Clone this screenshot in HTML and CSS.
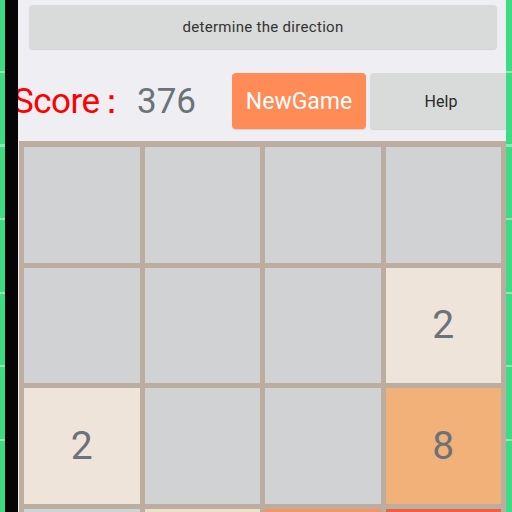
FILE: index.html
```html
<!DOCTYPE html>
<html>
<head>
<meta charset="utf-8">
<link rel="stylesheet" href="styles.css">
</head>
<body>
<div class="screen">
  <div class="edge edge-left"></div>
  <div class="bezel"></div>
  <div class="panel">
    <button class="btn btn-direction">determine the direction</button>
    <div class="score-row">
      <span class="score-label">Score<span class="colon">：</span></span>
      <span class="score-value">376</span>
      <button class="btn btn-new">NewGame</button>
      <button class="btn btn-help">Help</button>
    </div>
    <div class="board">
      <div class="cell"></div>
      <div class="cell"></div>
      <div class="cell"></div>
      <div class="cell"></div>
      <div class="cell"></div>
      <div class="cell"></div>
      <div class="cell"></div>
      <div class="cell t2">2</div>
      <div class="cell t2">2</div>
      <div class="cell"></div>
      <div class="cell"></div>
      <div class="cell t8">8</div>
      <div class="cell"></div>
      <div class="cell t4"></div>
      <div class="cell t16"></div>
      <div class="cell t32"></div>
    </div>
  </div>
  <div class="edge edge-right"></div>
</div>
</body>
</html>
```
FILE: styles.css
```css
html, body {
  margin: 0;
  padding: 0;
  width: 512px;
  height: 512px;
  overflow: hidden;
  background: #efeff3;
}
.screen {
  display: flex;
  width: 512px;
  height: 512px;
  overflow: hidden;
  font-family: Roboto, "Noto Sans", sans-serif;
}
.edge {
  flex: none;
  height: 512px;
  background-color: #3ddc84;
  background-image: repeating-linear-gradient(to bottom, transparent 0, transparent 71px, #8ee8b6 71px, #8ee8b6 73px, transparent 73px, transparent 73.5px);
}
.edge-left { width: 5px; }
.edge-right { width: 6px; }
.bezel {
  flex: none;
  width: 13px;
  height: 512px;
  background: #050505;
}
.panel {
  flex: none;
  width: 488px;
  height: 512px;
  overflow: hidden;
  background: #efeff3;
  display: flex;
  flex-direction: column;
}
.btn {
  border: none;
  border-radius: 4px;
  font-family: Roboto, "Noto Sans", sans-serif;
  padding: 0;
  box-shadow: 0 1px 1px rgba(0,0,0,0.12);
}
.btn-direction {
  margin: 5px 9px 0 11px;
  height: 44px;
  background: #d9dada;
  color: #333;
  font-size: 15px;
  letter-spacing: 0.3px;
  flex: none;
}
.score-row {
  flex: none;
  display: flex;
  align-items: center;
  height: 56px;
  margin-top: 24px;
  white-space: nowrap;
}
.score-label {
  margin-left: -5px;
  width: 124px;
  flex: none;
  color: #ff0000;
  font-size: 35px;
  letter-spacing: -0.5px;
}
.colon {
  margin-left: -6px;
}
.score-value {
  width: 95px;
  flex: none;
  color: #6b7278;
  font-size: 35px;
}
.btn-new {
  flex: none;
  width: 134px;
  height: 56px;
  background: #ff8c56;
  color: #ffffff;
  font-size: 23px;
}
.btn-help {
  flex: none;
  width: 142px;
  height: 56px;
  margin-left: 4px;
  background: #d9dada;
  color: #2a2a2a;
  font-size: 16px;
}
.board {
  flex: none;
  margin-top: 12px;
  margin-left: 1px;
  width: 477px;
  padding: 6px 5px 5px 5px;
  background: #bbada0;
  display: grid;
  grid-template-columns: repeat(4, 1fr);
  grid-auto-rows: 115.5px;
  gap: 5px;
}
.cell {
  background: #d1d2d4;
  display: flex;
  align-items: center;
  justify-content: center;
  color: #6b7278;
  font-size: 39px;
}
.t2 { background: #eee4da; }
.t4 { background: #ede0c8; }
.t8 { background: #f2b179; }
.t16 { background: #f59563; }
.t32 { background: #f65e3b; }
```
